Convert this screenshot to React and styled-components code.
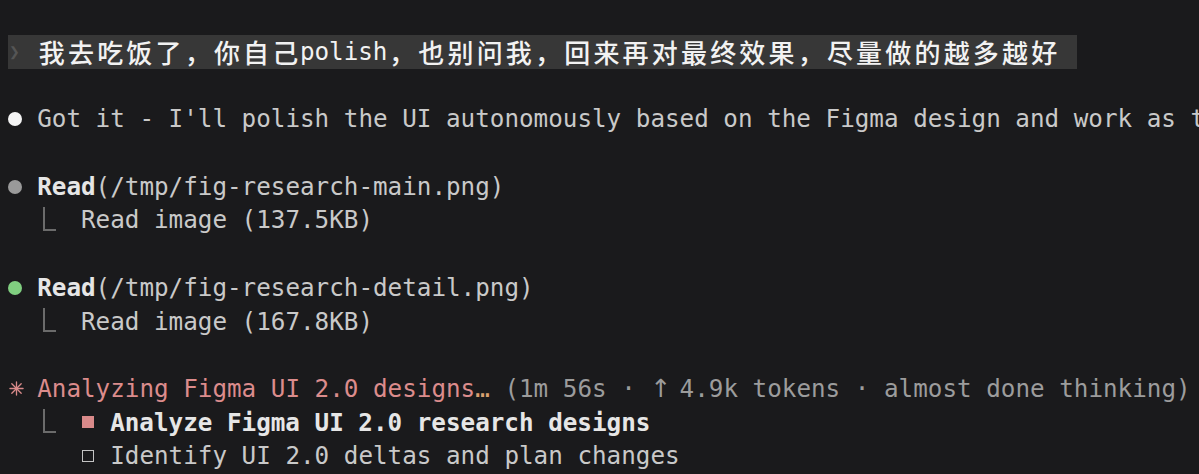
import React from "react"
import styled, { createGlobalStyle } from "styled-components"

const CELL = 14.6

const GlobalStyle = createGlobalStyle`
  html, body {
    background: #1a1a1c;
  }
  body {
    margin: 8px 0 0 8px;
    overflow: hidden;
  }
`

const Screen = styled.div`
  padding-top: 27px;
  font-family: "DejaVu Sans Mono", "Liberation Mono", monospace;
  font-size: 24.25px;
  line-height: 33.7px;
  color: #c9c9c9;
  white-space: pre;
  overflow: hidden;
`

const Line = styled.div`
  display: flex;
  align-items: center;
  height: 33.7px;
  padding-left: ${(p) => (p.$indent || 0) * CELL}px;
`

const PromptLine = styled(Line)`
  width: fit-content;
  padding-right: 18px;
  background: #373737;
  color: #f2f2f2;
`

const Blank = styled.div`
  height: 33.7px;
`

const Gutter = styled.span`
  flex: none;
  display: inline-flex;
  align-items: center;
  width: ${(p) => (p.$cells || 2) * CELL}px;
`

const Chevron = styled.span`
  color: #555555;
  font-size: 18px;
  margin-left: 1px;
`

const Dot = styled.span`
  width: 14px;
  height: 14px;
  border-radius: 50%;
  background: ${(p) => p.$color};
`

const Elbow = styled.span`
  width: 11px;
  height: 22px;
  margin-left: 6px;
  margin-top: -2px;
  border-left: 2px solid #6b6b6b;
  border-bottom: 2px solid #6b6b6b;
`

const Box = styled.span`
  width: 12px;
  height: 12px;
  margin-left: 1px;
  box-sizing: border-box;
  background: ${(p) => (p.$done ? "#d98a8a" : "transparent")};
  border: ${(p) => (p.$done ? "none" : "1.6px solid #c4c4c4")};
`

const Text = styled.span`
  flex: none;
  color: ${(p) => p.$color || "inherit"};
  font-weight: ${(p) => (p.$bold ? 700 : 400)};
`

const Arrow = styled.span`
  display: inline-block;
  width: ${CELL}px;
  text-align: center;
  font-family: "Noto Sans", "DejaVu Sans", sans-serif;
  font-size: 25px;
`

const Wide = styled.span`
  display: inline-block;
  width: ${CELL * 2}px;
  text-align: center;
  font-family: "Noto Sans CJK SC", sans-serif;
  font-size: 26px;
  font-weight: 500;
`

const Spinner = () => (
  <svg width="15" height="15" viewBox="0 0 16 16" style={{ marginLeft: 1 }}>
    <g stroke="#d98a8a" strokeWidth="1.4" strokeLinecap="round">
      <line x1="8" y1="1" x2="8" y2="15" />
      <line x1="1" y1="8" x2="15" y2="8" />
      <line x1="3" y1="3" x2="13" y2="13" />
      <line x1="13" y1="3" x2="3" y2="13" />
    </g>
  </svg>
)

const Mixed = ({ text }) => {
  const parts = []
  let run = ""
  Array.from(text).forEach((ch, i) => {
    if (ch.charCodeAt(0) > 0x2e80) {
      if (run) parts.push(run)
      run = ""
      parts.push(<Wide key={i}>{ch}</Wide>)
    } else {
      run += ch
    }
  })
  if (run) parts.push(run)
  return <>{parts}</>
}

const App = () => {
  return (
    <Screen>
      <GlobalStyle />
      <PromptLine>
        <Gutter>
          <Chevron>❯</Chevron>
        </Gutter>
        <Mixed text="我去吃饭了，你自己polish，也别问我，回来再对最终效果，尽量做的越多越好" />
      </PromptLine>
      <Blank />
      <Line>
        <Gutter>
          <Dot $color="#f4f4f4" />
        </Gutter>
        <Text>
          Got it - I'll polish the UI autonomously based on the Figma design and
          work as thoroughly as possible.
        </Text>
      </Line>
      <Blank />
      <Line>
        <Gutter>
          <Dot $color="#9a9a9a" />
        </Gutter>
        <Text $bold $color="#e6e6e6">Read</Text>
        <Text>(/tmp/fig-research-main.png)</Text>
      </Line>
      <Line $indent={2}>
        <Gutter $cells={3}>
          <Elbow />
        </Gutter>
        <Text>Read image (137.5KB)</Text>
      </Line>
      <Blank />
      <Line>
        <Gutter>
          <Dot $color="#80cf80" />
        </Gutter>
        <Text $bold $color="#e6e6e6">Read</Text>
        <Text>(/tmp/fig-research-detail.png)</Text>
      </Line>
      <Line $indent={2}>
        <Gutter $cells={3}>
          <Elbow />
        </Gutter>
        <Text>Read image (167.8KB)</Text>
      </Line>
      <Blank />
      <Line>
        <Gutter>
          <Spinner />
        </Gutter>
        <Text $color="#dc8c8c">Analyzing Figma UI 2.0 designs</Text>
        <Text $color="#d9a070">…</Text>
        <Text $color="#9c9c9c">
          {" (1m 56s · "}
          <Arrow>↑</Arrow>
          {" 4.9k tokens · almost done thinking)"}
        </Text>
      </Line>
      <Line $indent={2}>
        <Gutter $cells={3}>
          <Elbow />
        </Gutter>
        <Gutter>
          <Box $done />
        </Gutter>
        <Text $bold $color="#e6e6e6">Analyze Figma UI 2.0 research designs</Text>
      </Line>
      <Line $indent={5}>
        <Gutter>
          <Box />
        </Gutter>
        <Text>Identify UI 2.0 deltas and plan changes</Text>
      </Line>
    </Screen>
  )
}

export default App
